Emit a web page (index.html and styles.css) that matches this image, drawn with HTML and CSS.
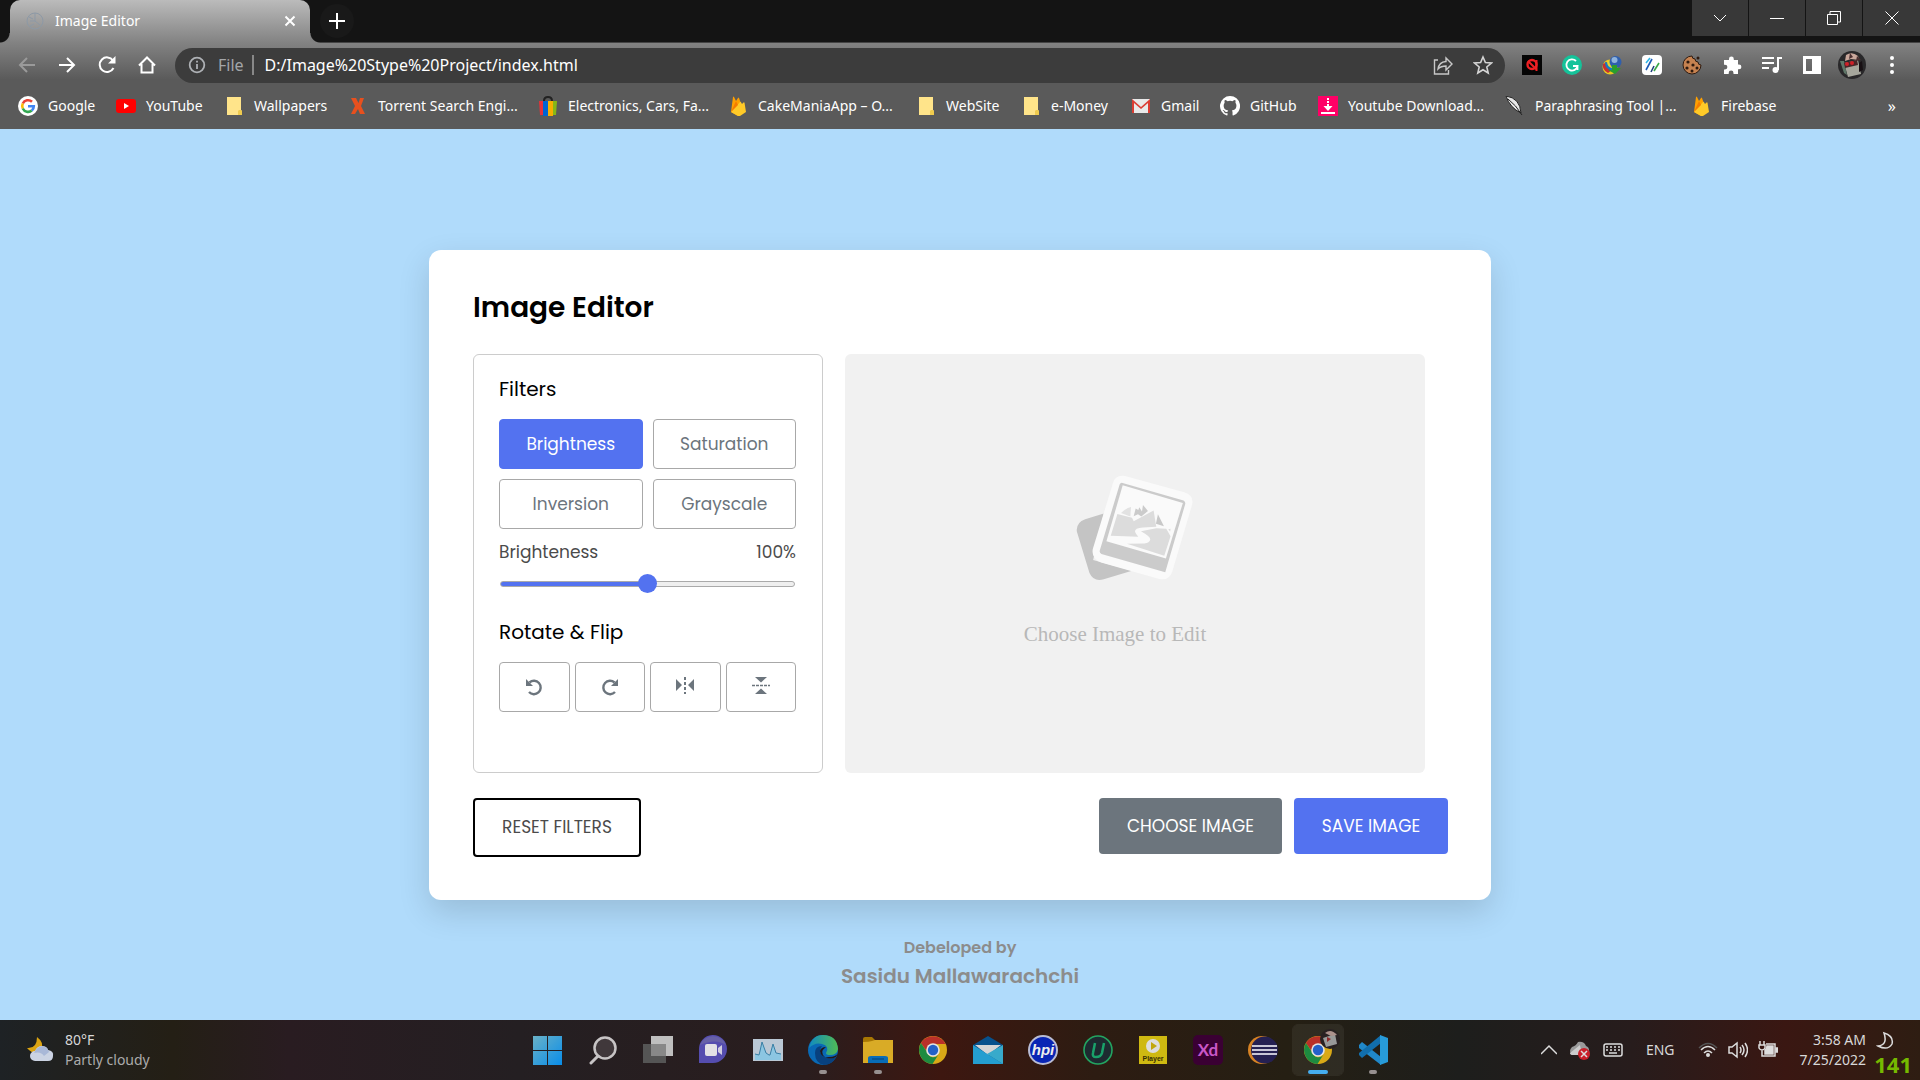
FILE: index.html
```html
<!DOCTYPE html>
<html lang="en">
<head>
<meta charset="utf-8">
<title>Image Editor</title>
<link rel="stylesheet" href="styles.css">
</head>
<body>
<svg class="defs" aria-hidden="true">
  <symbol id="folder" viewBox="0 0 20 20"><path d="M3 1h14v13l1 1v4H3z" fill="#ffe48a"/><path d="M14 19v-4l1-1h2l1 1v4z" fill="#f0cb4e"/></symbol>
  <symbol id="firebase" viewBox="0 0 20 20"><path d="M3 16 5 1q.5-1 1 0l2 4 2-3q.5-1 1 0l5 14-6 4z" fill="#ffa000"/><path d="m3 16 9-10q.6-.6 1 .2L14 8l1.500-1.500q.8-.5 1 .3L18 16l-6 4h-2z" fill="#ffca28"/><path d="m3 16 5-11 2 4z" fill="#f57c00"/></symbol>
  <symbol id="chrome" viewBox="0 0 30 30"><circle cx="15" cy="15" r="14" fill="#d9a917"/><path d="M2.900 8A14 14 0 0 1 27.500 9H15a6 6 0 0 0-5.400 8.500z" fill="#b93029"/><path d="M2.900 8A14 14 0 0 0 14.500 29l5.700-9a6 6 0 0 1-10.500-2z" fill="#1d8b40"/><circle cx="15" cy="15" r="6.800" fill="#e4e4e4"/><circle cx="15" cy="15" r="5.200" fill="#2461c8"/></symbol>
</svg>

<header class="browser">
  <div class="tabs">
    <div class="tab">
      <svg class="favicon" viewBox="0 0 18 18"><g fill="none" stroke="#8d99a6"><circle cx="9" cy="9" r="8"/><path d="M9 1v8H4m5 0 5 4M3 5l4 2m-3 7 4-2"/></g></svg>
      <span class="tab-title">Image Editor</span>
      <button class="bare" aria-label="Close tab"><svg width="12" height="12" viewBox="0 0 12 12"><path d="m1.500 1.500 9 9m0-9-9 9" stroke="#fff" stroke-width="2"/></svg></button>
    </div>
    <button class="bare new-tab" aria-label="New tab"><svg width="16" height="16" viewBox="0 0 16 16"><path d="M8 0v16M0 8h16" stroke="#fff" stroke-width="2"/></svg></button>
    <div class="window-buttons">
      <button aria-label="Search tabs"><svg width="14" height="14" viewBox="0 0 14 14"><path d="m1 4 6 6 6-6"/></svg></button>
      <button aria-label="Minimize"><svg width="14" height="14" viewBox="0 0 14 14"><path d="M0 7.500h14"/></svg></button>
      <button aria-label="Restore"><svg width="14" height="14" viewBox="0 0 14 14"><path d="M.5 3.500h10v10H.5zM3 3V.5h10.500V11H11"/></svg></button>
      <button aria-label="Close"><svg width="14" height="14" viewBox="0 0 14 14"><path d="m.5.5 13 13m0-13-13 13"/></svg></button>
    </div>
  </div>

  <div class="toolbar">
    <nav class="nav-buttons" aria-label="History">
      <button class="bare" aria-label="Back"><svg viewBox="0 0 20 20" stroke="#9a9a9a"><path d="M18 10H3m7-7-7 7 7 7"/></svg></button>
      <button class="bare" aria-label="Forward"><svg viewBox="0 0 20 20"><path d="M2 10h15m-7-7 7 7-7 7"/></svg></button>
      <button class="bare" aria-label="Reload"><svg viewBox="0 0 20 20"><path d="M16.500 13A7.300 7.300 0 1 1 16 5.500"/><path d="M18.500 1v7.500H11z" fill="#fff" stroke="none"/></svg></button>
      <button class="bare" aria-label="Home"><svg viewBox="0 0 20 20"><path d="M4.500 9v8.500h11V9M2 10.500 10 2.500l8 8"/></svg></button>
    </nav>
    <div class="omnibox">
      <svg class="info" viewBox="0 0 18 18" fill="none" stroke="#aeb1b5" stroke-width="1.800"><circle cx="9" cy="9" r="7.300"/><path d="M9 8v5M9 4.800v1.800"/></svg>
      <span class="scheme">File</span>
      <input class="url" aria-label="Address" value="D:/Image%20Stype%20Project/index.html">
      <button class="bare" aria-label="Share"><svg viewBox="0 0 20 20" fill="none" stroke="#c8c8c8" stroke-width="1.400"><path d="M5 5H1.500v14h14v-4M5 14q1-7 8-7.500V3l6 6-6 6v-4q-5 0-8 3z"/></svg></button>
      <button class="bare" aria-label="Bookmark"><svg viewBox="0 0 20 20" fill="none" stroke="#d4d4d4" stroke-width="1.600"><path d="m10 2 2.400 5.500 6 .5-4.600 4 1.400 6-5.200-3.200L4.800 18l1.400-6-4.600-4 6-.5z"/></svg></button>
    </div>
    <div class="extensions">
      <button class="bare" aria-label="Ad blocker"><svg viewBox="0 0 20 20"><path d="M0 0h20v20H0z" fill="#050505"/><circle cx="10" cy="9.500" r="4.500" fill="none" stroke="#ee2024" stroke-width="2.400"/><path d="M14.500 5v11M6 6l9 9" stroke="#ee2024" stroke-width="2"/></svg></button>
      <button class="bare" aria-label="Grammar checker"><svg viewBox="0 0 20 20"><circle cx="10" cy="10" r="10" fill="#15c39a"/><path d="M14 6a5.600 5.600 0 1 0 1.500 5H11m4.500 0v4" fill="none" stroke="#fff" stroke-width="1.800"/></svg></button>
      <button class="bare" aria-label="Download manager"><svg viewBox="0 0 20 20"><circle cx="8" cy="12" r="7.500" fill="#e9c820"/><path d="M1 9q-1 6 5 9l4-3q-5-1-5-8z" fill="#c93030"/><path d="M3 7q0 8 8 9l-3-8z" fill="#147dc0"/><path d="M5 6q0 7 6 7l-1-6z" fill="#e9d430"/><circle cx="13.500" cy="7" r="6" fill="#2f5fae"/><circle cx="12.500" cy="5" r="3" fill="#8fb3dd"/><path d="M10 10h5v3h4l-6 6-7-4h4z" fill="#2a9e2d"/></svg></button>
      <button class="bare" aria-label="Site tools"><svg viewBox="0 0 20 20"><rect width="20" height="20" rx="4" fill="#fff"/><path d="m4 8 4-5" stroke="#30b7e8" stroke-width="1.600"/><path d="m4 15 6-11" stroke="#1c5bb8" stroke-width="1.600"/><path d="m9 17 3-6" stroke="#1c3d7a" stroke-width="1.600"/><path d="m12 16 5-8" stroke="#39a747" stroke-width="1.600"/></svg></button>
      <button class="bare" aria-label="Cookies"><svg viewBox="0 0 20 20"><path d="M10 1a9 9 0 1 0 9 9q-3 0-3-3-3 0-3-3-3 0-3-3z" fill="#c68250" stroke="#2f1b10"/><g fill="#2f1b10"><circle cx="6" cy="7" r="1.600"/><circle cx="5" cy="13" r="1.600"/><circle cx="11" cy="10" r="1.600"/><circle cx="10" cy="16" r="1.500"/><circle cx="15" cy="13" r="1.500"/><circle cx="16" cy="3" r="1.500"/></g></svg></button>
      <button class="bare" aria-label="Extensions"><svg viewBox="0 0 20 20"><path d="M2 5h5V4a2.400 2.400 0 0 1 4.800 0v1H16v4.500h1a2.400 2.400 0 0 1 0 4.800h-1V19h-4.500v-1a2.400 2.400 0 0 0-4.800 0v1H2v-4.500h1a2.400 2.400 0 0 0 0-4.800H2z" fill="#fff"/></svg></button>
      <button class="bare" aria-label="Media controls"><svg viewBox="0 0 20 20"><path d="M0 3h12M0 8h12M0 13h7M16 15V3h4" fill="none" stroke="#fff" stroke-width="2"/><circle cx="13.500" cy="15" r="3" fill="#fff"/></svg></button>
      <button class="bare" aria-label="Side panel"><svg viewBox="0 0 20 20"><path d="M1 1h18v18H1zm3 3v12h6V4z" fill="#fff" fill-rule="evenodd"/></svg></button>
      <button class="bare" aria-label="Profile"><svg class="avatar" viewBox="0 0 28 28"><circle cx="14" cy="14" r="14" fill="#29282a"/><path d="m6 12 14-3 3 14-13 3z" fill="#a6a69c"/><path d="M8 4q6-4 12 1l1 4-8-1-6 2z" fill="#c9a79b"/><path d="M12 2l3 4-4 2zM19 5l4 4-5 1z" fill="#4a2f30"/><path d="m2 10 4 12 3 2-3-14z" fill="#5e7668"/><path d="m6 12 13-3 1 5-13 3z" fill="#4a2628"/><circle cx="9" cy="13" r="2" fill="#cf2028"/><circle cx="14" cy="12" r="2" fill="#cf2028"/><path d="M21 12v9l4-2-1-9z" fill="#181014"/></svg></button>
      <button class="bare" aria-label="Menu"><svg viewBox="0 0 20 20" fill="#fff"><circle cx="10" cy="3" r="2"/><circle cx="10" cy="10" r="2"/><circle cx="10" cy="17" r="2"/></svg></button>
    </div>
  </div>

  <nav class="bookmarks" aria-label="Bookmarks">
    <a href="#"><svg viewBox="0 0 20 20"><circle cx="10" cy="10" r="10" fill="#fff"/><g fill="none" stroke-width="2.600"><path d="M14 5.800A5.800 5.800 0 0 0 4.800 7.500" stroke="#ea4335"/><path d="M4.800 7.500a5.800 5.800 0 0 0 0 5" stroke="#fbbc05"/><path d="M4.800 12.500a5.800 5.800 0 0 0 9 2" stroke="#34a853"/><path d="M13.800 14.500a5.800 5.800 0 0 0 2-4.300H10" stroke="#4285f4"/></g></svg>Google</a>
    <a href="#"><svg viewBox="0 0 20 20"><rect y="3" width="20" height="14" rx="3" fill="#f00"/><path d="m8 7 5 3-5 3z" fill="#fff"/></svg>YouTube</a>
    <a href="#"><svg><use href="#folder"/></svg>Wallpapers</a>
    <a href="#"><svg viewBox="0 0 20 20"><path d="M3 2h5l2.500 5L12 2h4l-3 8 4 8h-5l-2-5-3 5H3l4-8z" fill="#e8501e"/></svg>Torrent Search Engi...</a>
    <a href="#"><svg viewBox="0 0 20 20"><path d="M6 5q0-4 4-4t4 4" fill="none" stroke="#222" stroke-width="2"/><path d="M1 5h5v14H2z" fill="#e53238"/><path d="M5 5h5v15H5z" fill="#0064d2"/><path d="M10 5h5v15h-5z" fill="#f5af02"/><path d="M15 5h4l-1 14h-3z" fill="#86b817"/></svg>Electronics, Cars, Fa...</a>
    <a href="#"><svg><use href="#firebase"/></svg>CakeManiaApp – O...</a>
    <a href="#"><svg><use href="#folder"/></svg>WebSite</a>
    <a href="#"><svg><use href="#folder"/></svg>e-Money</a>
    <a href="#"><svg viewBox="0 0 20 20"><path d="M1 3h18v14H1z" fill="#e9e9e9"/><path d="M1 17V3l9 8 9-8v14h-2V7l-7 6-7-6v10z" fill="#db3d33"/></svg>Gmail</a>
    <a href="#"><svg viewBox="0 0 16 16"><path fill="#fff" d="M8 0a8 8 0 0 0-2.530 15.590c.4.070.55-.17.550-.38v-1.490c-2.010.37-2.530-.49-2.690-.94-.09-.23-.48-.94-.82-1.130-.28-.15-.68-.52-.01-.53.630-.01 1.080.58 1.230.82.720 1.210 1.870.87 2.330.66.070-.52.280-.87.510-1.070-1.780-.2-3.640-.89-3.640-3.950 0-.87.310-1.590.82-2.150-.08-.2-.36-1.020.08-2.120 0 0 .67-.21 2.200.82a7.600 7.600 0 0 1 4 0c1.530-1.040 2.200-.82 2.200-.82.440 1.100.16 1.920.08 2.120.51.560.82 1.270.82 2.150 0 3.070-1.870 3.750-3.650 3.950.29.250.54.730.54 1.480v2.200c0 .21.150.46.550.38A8 8 0 0 0 8 0z"/></svg>GitHub</a>
    <a href="#"><svg viewBox="0 0 20 20"><path d="M0 0h20v20H0z" fill="#f06"/><path d="M10 2v2m0 1v2m0 1v4M3 17h14" stroke="#fff" stroke-width="2"/><path d="M5.500 10h9L10 15z" fill="#fff"/></svg>Youtube Download...</a>
    <a href="#"><svg viewBox="0 0 20 20"><path d="M1 0q14 2 15 17Q5 12 1 0z" fill="#e8e8e8" stroke="#222"/><path d="M3 3q8 6 14 16" fill="none" stroke="#222"/></svg>Paraphrasing Tool |...</a>
    <a href="#"><svg><use href="#firebase"/></svg>Firebase</a>
    <button class="bare more" aria-label="More bookmarks">»</button>
  </nav>
</header>

<main class="page">
  <section class="card">
    <h1>Image Editor</h1>
    <div class="workspace">
      <div class="panel">
        <h2>Filters</h2>
        <div class="filters">
          <button class="option active">Brightness</button>
          <button class="option">Saturation</button>
          <button class="option">Inversion</button>
          <button class="option">Grayscale</button>
        </div>
        <div class="slider-info"><label for="amount">Brighteness</label><output for="amount">100%</output></div>
        <input class="slider" id="amount" type="range" min="0" max="200" value="100">
        <h2>Rotate &amp; Flip</h2>
        <div class="rotate">
          <button class="option" aria-label="Rotate left"><svg viewBox="0 0 20 20"><path d="M5.500 5.500A6.700 6.700 0 1 1 5 15" fill="none" stroke="#6c757d" stroke-width="2.400"/><path d="M2 2v7h7z" fill="#6c757d"/></svg></button>
          <button class="option" aria-label="Rotate right"><svg viewBox="0 0 20 20"><path d="M14.500 5.500A6.700 6.700 0 1 0 15 15" fill="none" stroke="#6c757d" stroke-width="2.400"/><path d="M18 2v7h-7z" fill="#6c757d"/></svg></button>
          <button class="option" aria-label="Flip horizontal"><svg viewBox="0 0 20 20"><path d="M1 2v12l6-6zm18 0v12l-6-6z" fill="#6c757d"/><path d="M10 0v17" stroke="#6c757d" stroke-width="2" stroke-dasharray="3 2"/></svg></button>
          <button class="option" aria-label="Flip vertical"><svg viewBox="0 0 20 20"><path d="M4 0h12l-6 5.500zm0 17h12l-6-5.500z" fill="#6c757d"/><path d="M1 8.500h18" stroke="#6c757d" stroke-width="1.400" stroke-dasharray="3 1"/></svg></button>
        </div>
      </div>
      <figure class="preview">
        <svg viewBox="224 100 360 325" aria-hidden="true">
          <path d="m229 273q-3-27 25-37l56-17-32 140 117 32-85 26q-30 9-43-19z" fill="#c4c4c4"/>
          <path d="M374 106 552 155q30 9 24 37l-60 202q-9 28-39 22l-175-50q-30-12-25-40l61-200q7-24 36-20z" fill="#fafafa"/>
          <path d="m364 126 186 54q7 4 5 11l-60 205-192-55q-7-5-5-11l60-199q2-5 6-5z" fill="#cbcbcb"/>
          <path d="m367 134 181 53-51 167-179-52z" fill="#fafafa"/>
          <path d="m351 220 44 12 5 10 60-32 8 49-40 2q-25 1-24 13 3 8 10 15l-83-3z" fill="#dcdcdc"/>
          <path d="m422 272 46-9 30 2 13 22-19 59-112-36 52-1q16-2 18-13 0-8-28-24z" fill="#dcdcdc"/>
          <path d="m362 217q16-15 30-18l-2 29z" fill="#e2e2e2"/>
          <path d="m406 204-6 23 13-6 10 7 20-17-15-18-3 20-8-13-3 8z" fill="#cbcbcb"/>
          <path d="m473 221 18 36-24-7z" fill="#c8c8c8"/>
          <path d="m511 265-1 8-6-7z" fill="#dcdcdc"/>
        </svg>
        <figcaption>Choose Image to Edit</figcaption>
      </figure>
    </div>
    <div class="actions">
      <button class="reset">RESET FILTERS</button>
      <button class="choose">CHOOSE IMAGE</button>
      <button class="save">SAVE IMAGE</button>
    </div>
  </section>
  <footer class="credit"><p>Debeloped by</p><p class="author">Sasidu Mallawarachchi</p></footer>
</main>

<div class="taskbar">
  <div class="weather">
    <svg width="28" height="28" viewBox="0 0 28 28"><path d="M11 1q8 6 4 13-6 7-14-2 10 1 10-11z" fill="#dca412"/><path d="M9 25a5 5 0 0 1 0-10q2-5 7-5 5 0 6 4 6 1 5 6 0 5-5 5z" fill="#cbd3e3"/><path d="M8 17q7-2 10 3l5-4-2-4q-8-5-13 5z" fill="#a9b8d7"/></svg>
    <div>80°F<div class="dim">Partly cloudy</div></div>
  </div>
  <nav class="apps" aria-label="Apps">
    <button aria-label="Start"><svg viewBox="0 0 30 30"><defs><linearGradient id="win" gradientUnits="userSpaceOnUse" x1="0" y1="0" x2="30" y2="30"><stop stop-color="#6bb2c7"/><stop offset="1" stop-color="#078ce9"/></linearGradient></defs><path d="M0 1h14v14H0zm15 0h14v14H15zM0 16h14v14H0zm15 0h14v14H15z" fill="url(#win)"/></svg></button>
    <button aria-label="Search"><svg viewBox="0 0 30 30"><circle cx="17" cy="13" r="10.500" fill="#40383b" stroke="#c7c4c5" stroke-width="2.500"/><path d="m10 21-7 7" stroke="#c7c4c5" stroke-width="3" stroke-linecap="round"/></svg></button>
    <button aria-label="Task view"><svg viewBox="0 0 30 30"><path d="M0 9h23v19H0z" fill="#555"/><path d="M8 1h22v20H8z" fill="#bfbfbf"/><path d="M8 9h15v12H8z" fill="#888"/></svg></button>
    <button aria-label="Chat"><svg viewBox="0 0 30 30"><path d="M1 28V15A14 14 0 1 1 15 28z" fill="#554daf"/><path d="M2 10A14 14 0 0 1 28 10q-10-7-26 0z" fill="#6761a8"/><rect x="7" y="9" width="12" height="12" rx="2" fill="#e2e1e5"/><path d="m20 13 4-3v10l-4-3z" fill="#d0cde0"/></svg></button>
    <button aria-label="Monitor"><svg viewBox="0 0 30 30"><path d="M0 4h30v22H0z" fill="#bac8d5"/><path d="M2 25v-6l4 1 1-4 2-9 4 11 3 2h1l3-11 3 9 5 1v6z" fill="#8cc6e2"/><path d="m2 19 4 1 1-4 2-9 4 11 3 2h1l3-11 3 9 5 1" fill="none" stroke="#397fa5"/></svg></button>
    <button class="open" aria-label="Edge"><svg viewBox="0 0 30 30"><defs><linearGradient id="edge" x2="1"><stop stop-color="#118bc0"/><stop offset="1" stop-color="#50bb54"/></linearGradient></defs><circle cx="15" cy="15" r="15" fill="#0969b5"/><path d="M1 13Q4 0 15 0q14 0 15 14-1 6-8 6-4 0-4-2 4-7-4-9Q7 7 1 13z" fill="url(#edge)"/><path d="M28 22q-8 4-14-2-4-4 0-9-7 0-7 7 0 10 9 12 8 0 12-8z" fill="#08417f"/><path d="M18 12q-5 0-6 4 1 7 9 6 7 0 9-4l-2 4q-6 3-11 0-6-5 1-10z" fill="#231719"/></svg></button>
    <button class="open" aria-label="Files"><svg viewBox="0 0 30 30"><path d="M0 4q0-2 2-2h7l4 4v4H0z" fill="#a87703"/><path d="M0 7q6 0 9-1l3-1h18v23H0z" fill="#d9ab26"/><path d="M5 28v-5q0-2 3-2h14q3 0 3 2v5z" fill="#086cb7"/><path d="M9 24h12" stroke="#053e72"/></svg></button>
    <button aria-label="Chrome"><svg><use href="#chrome"/></svg></button>
    <button aria-label="Mail"><svg viewBox="0 0 30 30"><path d="m0 10 15-9 15 9v19H0z" fill="#07518c"/><path d="M2 10h26L15 20z" fill="#d5d5d5"/><path d="m0 10 30 19H0z" fill="#249ed0"/><path d="M30 10v19L14 19z" fill="#38aacb"/></svg></button>
    <button aria-label="hpi"><svg viewBox="0 0 30 30"><circle cx="15" cy="15" r="14" fill="#0925b4" stroke="#b9bcd4" stroke-width="2"/><text x="15" y="20" text-anchor="middle" class="logo-hpi">hpi</text></svg></button>
    <button aria-label="Uninstaller"><svg viewBox="0 0 30 30"><circle cx="15" cy="15" r="14" fill="#1d2a30" stroke="#23a461" stroke-width="1.600"/><path d="m12 8-2 10q-1 4 3 4 5 0 6-4l2-10" fill="none" stroke="#19a16a" stroke-width="2.500"/></svg></button>
    <button aria-label="Player"><svg viewBox="0 0 30 30"><path d="M1 1h28v28H1z" fill="#cfb911"/><circle cx="15" cy="11" r="7" fill="#ddd"/><path d="m13 7 6 4-6 4z" fill="#c1a70e"/><text x="15" y="26" text-anchor="middle" class="logo-player">Player</text></svg></button>
    <button aria-label="Xd"><svg viewBox="0 0 30 30"><rect width="30" height="30" rx="5" fill="#3a0033"/><text x="15" y="21" text-anchor="middle" class="logo-xd">Xd</text></svg></button>
    <button aria-label="Eclipse"><svg viewBox="0 0 30 30"><circle cx="14" cy="15" r="14" fill="#d78324"/><circle cx="16.500" cy="15" r="13.500" fill="#252052"/><path d="M4 11h25M4 15h25M4 19h25" stroke="#c8c6d6" stroke-width="2"/></svg></button>
    <button class="current" aria-label="Chrome profile"><svg><use href="#chrome"/></svg><svg class="badge" viewBox="0 0 20 20"><circle cx="10" cy="10" r="10" fill="#292122"/><path d="m3 9 12-4 2 10-11 3z" fill="#999"/><path d="M5 4q6-5 12 2l-6 1z" fill="#ac918c"/><path d="m7 8 4 2-4 3z" fill="#8e292b"/></svg></button>
    <button class="open" aria-label="Code"><svg viewBox="0 0 30 30"><path d="m1 10 3-3 19 15v8L1 13z" fill="#2088c9"/><path d="m1 20 3 3L23 8V0L1 18z" fill="#116eac"/><path d="m22 0 8 3v24l-8 3z" fill="#279bd9"/></svg></button>
  </nav>
  <div class="tray">
    <svg width="16" height="30" viewBox="0 0 16 30"><path d="m0 19 8-8 8 8"/></svg>
    <svg width="20" height="30" viewBox="0 0 20 30"><path d="M2 20q-4-4 0-8 4-1 6-5 6-1 8 4 4 1 3 8z" fill="#9a9a9a" stroke="none"/><path d="m0 18 10-8 2 10H3q-3 0-3-2z" fill="#ccc" stroke="none"/><circle cx="14" cy="19" r="6" fill="#c9202a" stroke="none"/><path d="m11 16 6 6m0-6-6 6"/></svg>
    <svg width="20" height="30" viewBox="0 0 20 30"><rect x="1" y="9" width="18" height="12" rx="2"/><path d="M3 12h14M3 15h14" stroke-dasharray="2 2"/><path d="M6 18h8"/></svg>
    <span class="lang">ENG</span>
    <svg width="20" height="30" viewBox="0 0 20 30"><path d="M1 13q9-9 18 0" stroke="#555"/><path d="M3 15q7-7 14 0M6 18q4-4 8 0"/><circle cx="10" cy="20" r="2" fill="#ddd" stroke="none"/></svg>
    <svg width="20" height="30" viewBox="0 0 20 30"><path d="M1 12h3l5-4v14l-5-4H1zM12 12q2 3 0 6m2-8q4 5 0 10m3-12q5 7 0 14"/></svg>
    <svg width="20" height="30" viewBox="0 0 20 30"><path d="M2 6v4m4-4v4m-5 0h6v3q-1 2-3 2t-3-2zm3 5v6h2M8 9h9v12H5"/><path d="M7 15q2-1 2-4h6v8H7zM18 13h2v4h-2z" fill="#ddd"/></svg>
    <div class="clock">3:58 AM<br>7/25/2022</div>
    <div class="focus"><svg width="20" height="24" viewBox="0 0 20 24"><path d="M8 3q10 3 8 11-4 7-14 2 10-1 6-13z"/></svg><span class="fps">141</span></div>
  </div>
</div>
</body>
</html>
```
FILE: styles.css
```css
* { box-sizing: border-box; }
body {
  margin: 0;
  min-height: 100vh;
  display: flex;
  flex-direction: column;
  font-family: "Noto Sans", "Open Sans", sans-serif;
  background: #b0dbfb;
}
button { font: inherit; color: inherit; padding: 0; border: 0; background: none; display: flex; align-items: center; justify-content: center; }
h1, h2, p, figure { margin: 0; }
svg { display: block; flex: none; }
.defs { position: absolute; width: 0; height: 0; }

/* Browser frame */
.browser { color: #fff; background: #5a5a5a; }
.tabs { display: flex; height: 43px; padding-left: 10px; background: #141414; border-bottom: 1px solid #444; }
.tab {
  position: relative;
  display: flex;
  align-items: center;
  width: 300px;
  height: 43px;
  padding: 0 14px 2px 16px;
  border-radius: 10px 10px 0 0;
  background: linear-gradient(#bbb, #828282);
  font-size: 14px;
}
.tab::before, .tab::after { content: ""; position: absolute; bottom: 0; width: 10px; height: 10px; }
.tab::before { left: -10px; background: radial-gradient(circle at 0 0, #141414 9px, #828282 10px); }
.tab::after { right: -10px; background: radial-gradient(circle at 100% 0, #141414 9px, #828282 10px); }
.favicon { width: 18px; height: 18px; }
.tab-title { flex: 1; padding-left: 11px; }
.new-tab { width: 34px; height: 34px; margin: 4px 0 0 10px; border-radius: 50%; background: #191919; }
.window-buttons { display: flex; gap: 1px; margin-left: auto; }
.window-buttons button { width: 56px; height: 36px; background: #383838; }
.window-buttons svg { fill: none; stroke: #fff; }
.window-buttons button:last-child { width: 57px; }

.toolbar { display: flex; align-items: center; height: 43px; padding: 1px 18px 0 17px; background: linear-gradient(#828282, #5a5a5a 85%); }
.nav-buttons { display: flex; gap: 20px; margin-right: 18px; }
.nav-buttons svg { width: 20px; height: 20px; fill: none; stroke-width: 2; }
.nav-buttons button:not(:first-child) svg { stroke: #fff; }
.omnibox { flex: 1; display: flex; align-items: center; gap: 20px; height: 35px; padding: 0 12px 0 13px; border-radius: 18px; background: #3c3c3c; font-size: 16px; }
.omnibox svg { width: 20px; height: 20px; }
.omnibox .info { width: 18px; height: 18px; margin-right: -8px; }
.scheme { padding-right: 8px; margin-right: -9px; border-right: 2px solid #888; line-height: 20px; color: #a4a6a9; }
.url { flex: 1; min-width: 0; padding: 0; border: 0; outline: 0; background: none; color: #fff; font: inherit; }
.extensions { display: flex; align-items: center; gap: 20px; margin-left: 17px; }
.extensions button { width: 20px; height: 28px; }
.extensions svg { width: 20px; height: 20px; }
.extensions .avatar { width: 28px; height: 28px; }

.bookmarks {
  display: grid;
  grid-template-columns: 98px 108px 124px 190px 190px 188px 105px 110px 89px 98px 187px 186px 1fr auto;
  align-items: center;
  height: 43px;
  padding: 0 24px 4px 18px;
  font-size: 14px;
}
.bookmarks a { display: flex; align-items: center; gap: 10px; color: inherit; text-decoration: none; white-space: nowrap; }
.bookmarks svg { width: 20px; height: 20px; }
.more { font-size: 16px; }

/* Editor page */
.page { flex: 1; display: grid; grid-template-rows: 1fr auto 1fr; justify-items: center; font-family: Poppins, Inter, sans-serif; }
.card {
  grid-row: 2;
  width: min(1062px, 100% - 40px);
  padding: 41px 43px 43px 44px;
  border-radius: 12px;
  background: #fff;
  box-shadow: 0 12px 32px rgba(0, 0, 0, .14);
}
h1 { margin-bottom: 29px; font-size: 28px; line-height: 34px; font-weight: 600; }
.workspace { display: grid; grid-template-columns: 350px minmax(0, 580px); gap: 22px; }
.panel { height: 419px; padding: 20px 26px 0 25px; border: 1px solid #ccc; border-radius: 6px; }
h2 { font-size: 20px; line-height: 28px; font-weight: 400; }
.filters { display: grid; grid-template-columns: 1fr 1fr; gap: 10px; margin-top: 16px; }
.option { height: 50px; border: 1px solid #a8a8a8; border-radius: 4px; color: #6c757d; font-size: 17px; }
.option.active { border-color: #5372f0; background: #5372f0; color: #fff; }
.option svg { width: 20px; height: 20px; }
.slider-info { display: flex; justify-content: space-between; margin-top: 11px; color: #4b4b4b; font-size: 17px; line-height: 24px; }
.slider { appearance: none; display: block; width: 100%; height: 20px; margin: 10px 0 24px; padding: 0 1px; background: none; }
.slider::-webkit-slider-runnable-track { height: 6px; border: 1px solid #aaa; border-radius: 3px; background: linear-gradient(90deg, #5372f0 50%, #efefef 50%); }
.slider::-webkit-slider-thumb { appearance: none; width: 19px; height: 19px; margin-top: -8px; border-radius: 50%; background: #5372f0; }
.rotate { display: grid; grid-template-columns: repeat(4, 1fr); gap: 5px; margin-top: 16px; }
.preview { display: flex; flex-direction: column; align-items: center; justify-content: center; gap: 38px; padding-bottom: 4px; border-radius: 6px; background: #f1f1f1; }
.preview svg { width: 120px; height: 108px; }
figcaption { padding-right: 40px; font: 21px/28px "Liberation Serif", serif; color: #b8b8b8; }
.actions { display: flex; align-items: flex-start; gap: 12px; margin-top: 25px; font-size: 17px; }
.actions button { height: 56px; border-radius: 4px; color: #fff; }
.actions .reset { width: 168px; height: 59px; margin-right: auto; border: 2px solid #000; color: #4b4b4b; }
.actions .choose { width: 183px; background: #6c757d; }
.actions .save { width: 154px; background: #5372f0; }
.credit { grid-row: 3; margin-top: 34px; text-align: center; color: #8c8c8c; font-size: 16px; line-height: 28px; font-weight: 600; }
.author { font-size: 20px; }

/* Desktop taskbar */
.taskbar {
  display: grid;
  grid-template-columns: 1fr auto 1fr;
  align-items: center;
  height: 60px;
  background: linear-gradient(90deg, #1e2225 0%, #241f15 9%, #291c21 15%, #241f22 27%, #2a1d1e 42%, #3d1710 49%, #2d1c12 57%, #251f13 67%, #1d1e1c 76%, #271c1c 85%, #3a1712 93%, #2e1d12 100%);
  color: #d8d8d8;
  font-size: 14px;
  line-height: 20px;
}
.weather { display: flex; align-items: center; gap: 11px; padding-left: 26px; }
.dim { color: #ababab; }
.apps { display: flex; gap: 5px; }
.apps button { position: relative; width: 50px; height: 50px; border-radius: 5px; }
.apps svg { width: 30px; height: 30px; }
.apps .current { background: rgba(255, 255, 255, .06); outline: 1px solid rgba(255, 255, 255, .06); }
.apps .open::after, .apps .current::after { content: ""; position: absolute; bottom: 1px; width: 8px; height: 4px; border-radius: 2px; background: #979090; }
.apps .current::after { width: 20px; background: #45aef0; }
.apps .badge { position: absolute; top: 4px; right: 3px; width: 20px; height: 20px; }
.logo-hpi { font: italic bold 15px "Liberation Sans", sans-serif; fill: #eee; }
.logo-player { font: bold 7px "Liberation Sans", sans-serif; fill: #382f05; }
.logo-xd { font: bold 17px Lato, sans-serif; fill: #c957c9; }
.tray { display: flex; align-items: center; justify-content: flex-end; gap: 10px; padding-right: 8px; }
.tray svg { fill: none; stroke: #ddd; stroke-width: 1.500; }
.tray svg:nth-of-type(2), .tray svg:nth-of-type(3) { margin-left: 3px; }
.lang { margin: 0 13px; }
.clock { margin-left: 12px; text-align: right; }
.focus { position: relative; width: 36px; height: 40px; }
.fps { position: absolute; right: 0; bottom: -4px; color: #76b900; font: bold 22px/20px "Noto Sans", sans-serif; }
```
